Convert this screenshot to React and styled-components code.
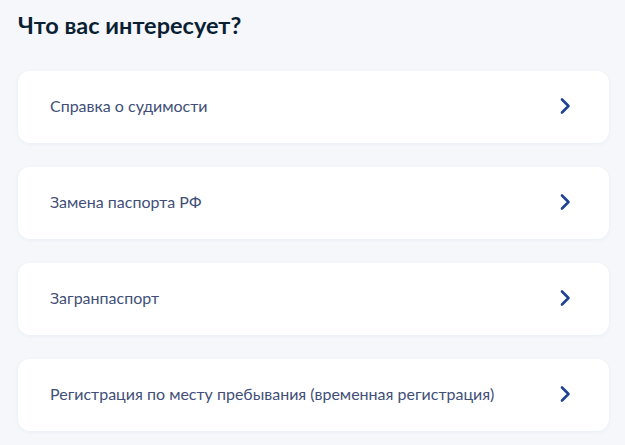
import React from "react";
import styled, { createGlobalStyle } from "styled-components";

//Styling//
const GlobalStyle = createGlobalStyle`
  html, body {
    margin: 0;
    padding: 0;
    background: #f5f7fb;
  }
  body {
    font-family: Lato, "Noto Sans", sans-serif;
  }
`;

const Page = styled.div`
  width: 625px;
  height: 445px;
  padding: 8px 16px 0 18px;
  box-sizing: border-box;
  overflow: hidden;
`;

const Title = styled.h2`
  margin: 0 0 28px;
  font-size: 23.5px;
  line-height: 35px;
  font-weight: 700;
  color: #0b1f33;
`;

const List = styled.div`
  display: flex;
  flex-direction: column;
  gap: 24px;
  width: 591px;
`;

const Item = styled.a`
  display: flex;
  align-items: center;
  justify-content: space-between;
  height: 72px;
  padding: 0 38px 3px 32px;
  box-sizing: border-box;
  background: #ffffff;
  border-radius: 12px;
  box-shadow: 0 1px 4px rgba(20, 50, 110, 0.05);
  text-decoration: none;
  cursor: pointer;
`;

const Label = styled.span`
  font-size: 16px;
  color: #414f78;
`;

const Chevron = () => (
  <svg width="12" height="18" viewBox="0 0 12 18" fill="none">
    <path
      d="M3 2.5 L9.5 9 L3 15.5"
      stroke="#1d4391"
      strokeWidth="2.6"
      strokeLinecap="round"
      strokeLinejoin="round"
    />
  </svg>
);

const items = [
  "Справка о судимости",
  "Замена паспорта РФ",
  "Загранпаспорт",
  "Регистрация по месту пребывания (временная регистрация)",
];

export default function App() {
  return (
    <Page>
      <GlobalStyle />
      <Title>Что вас интересует?</Title>
      <List>
        {items.map((text) => (
          <Item key={text}>
            <Label>{text}</Label>
            <Chevron />
          </Item>
        ))}
      </List>
    </Page>
  );
}
